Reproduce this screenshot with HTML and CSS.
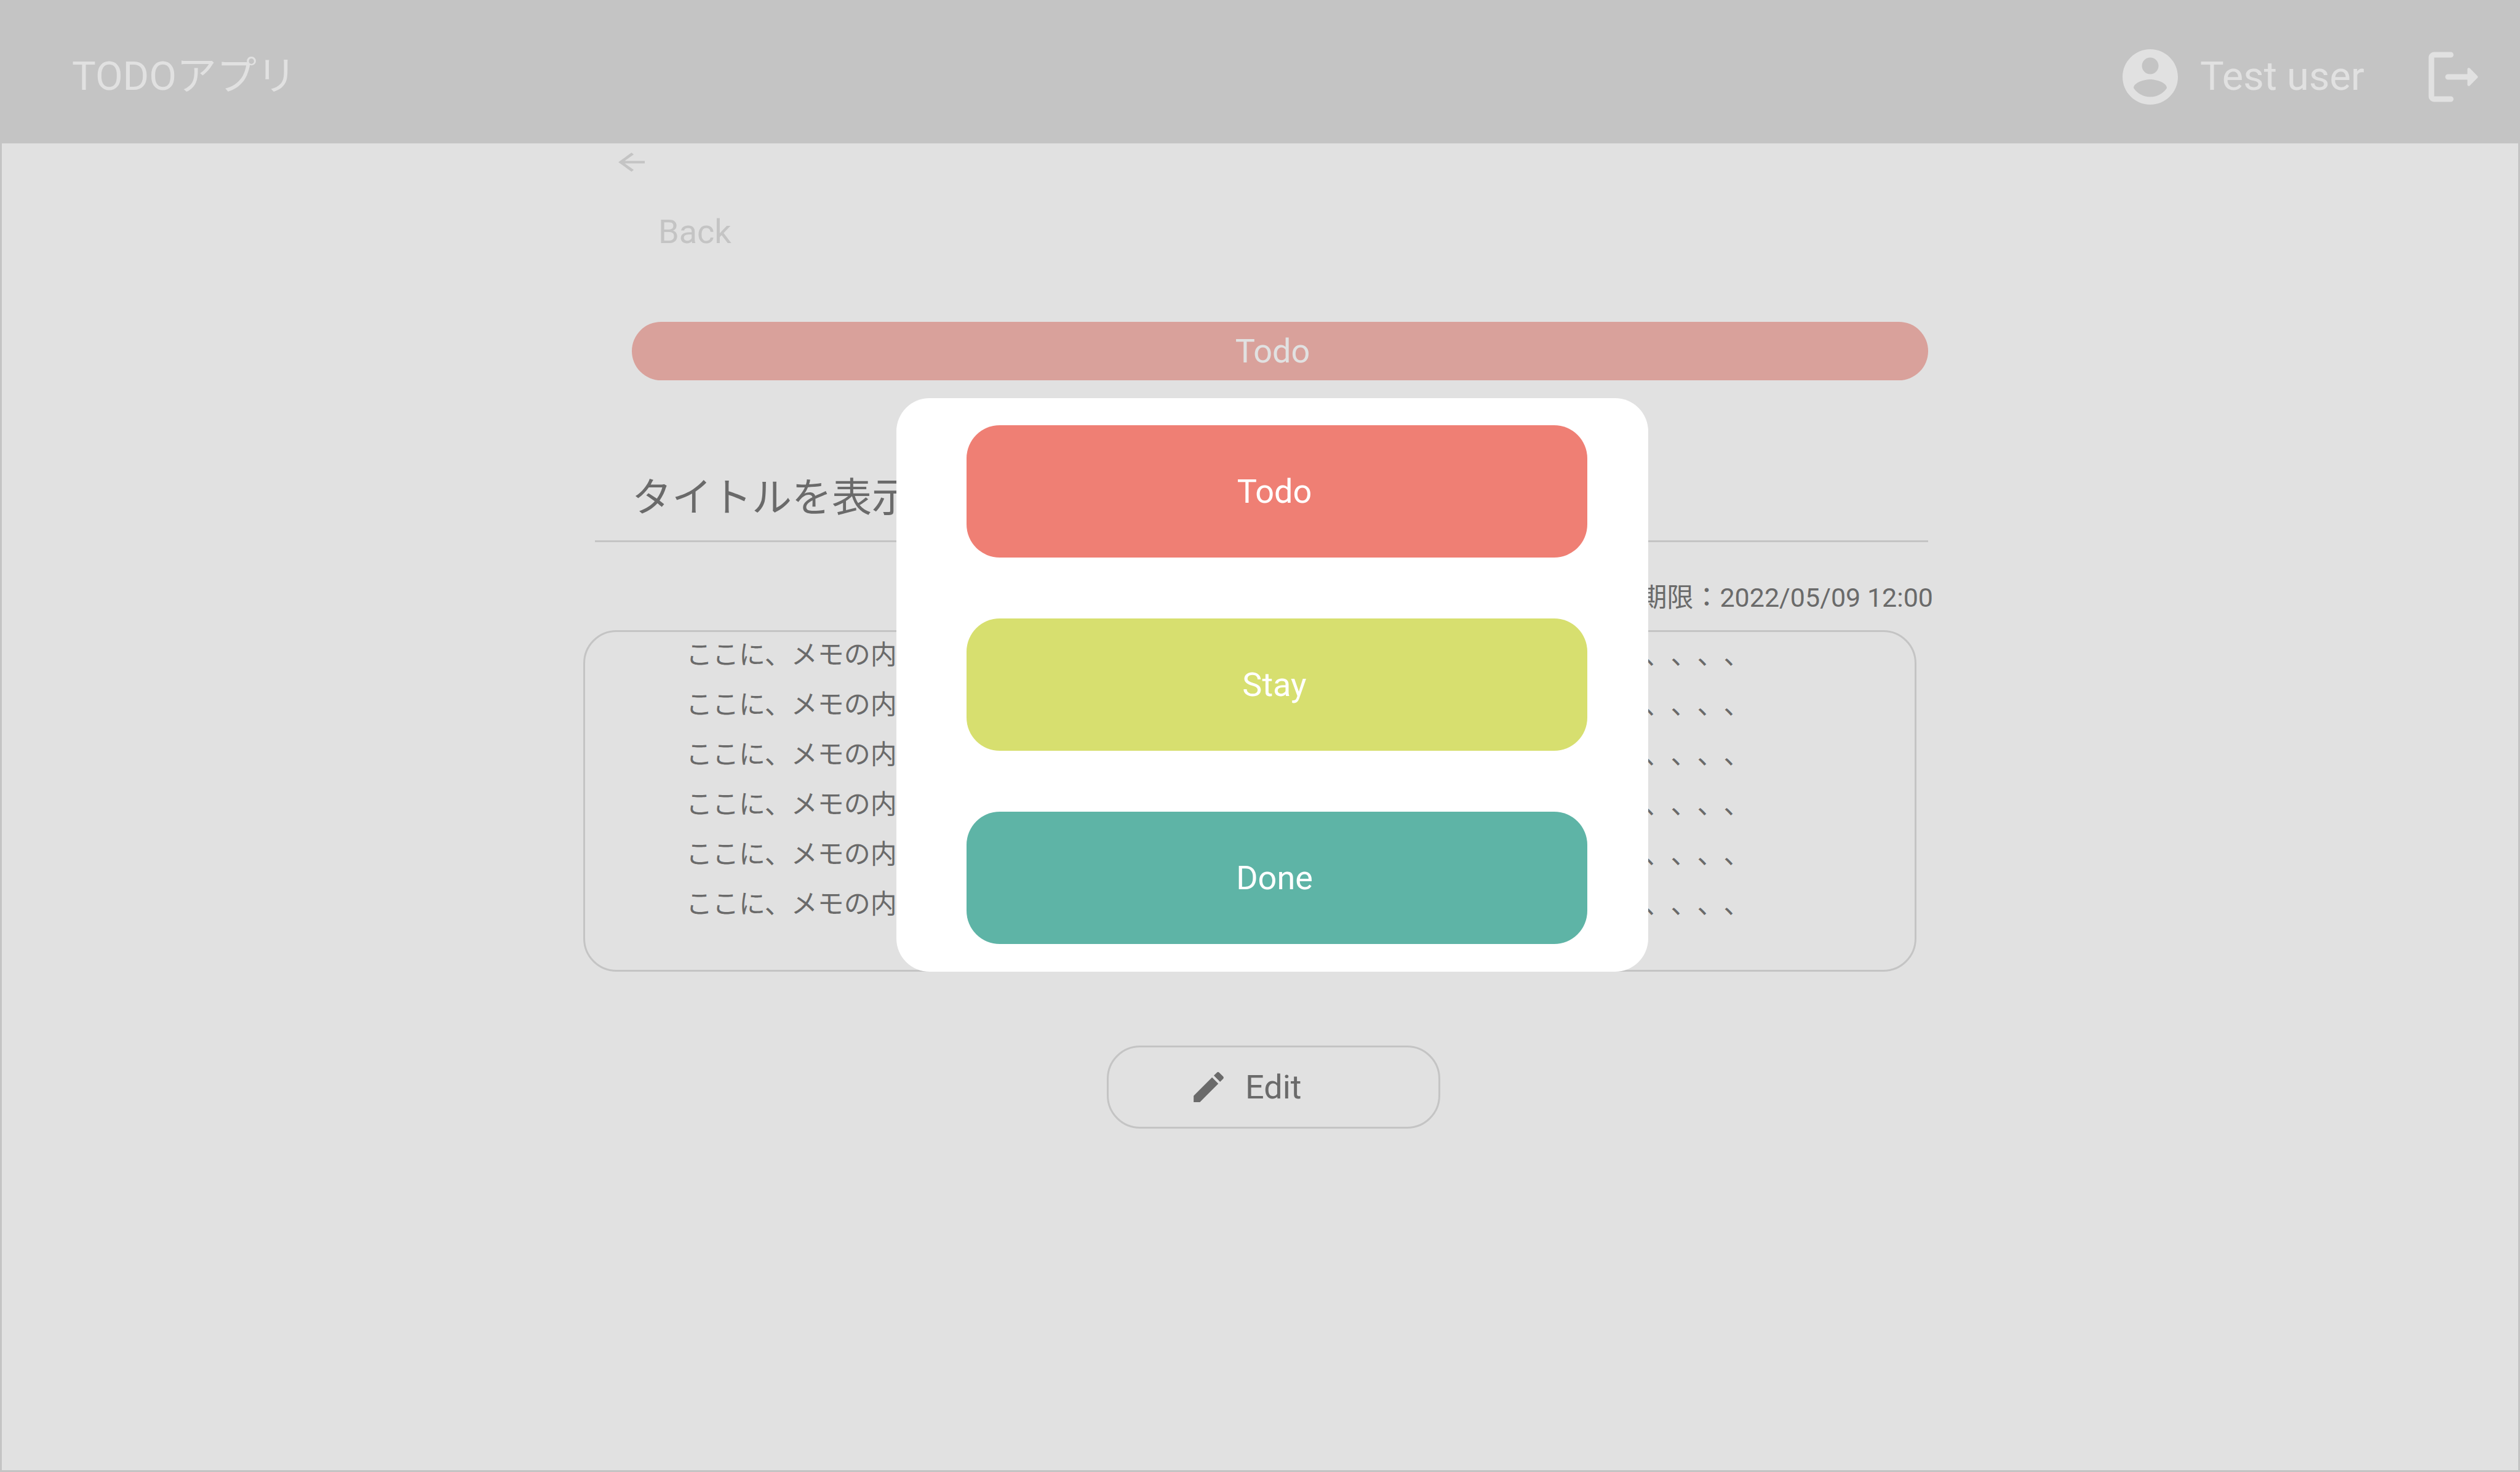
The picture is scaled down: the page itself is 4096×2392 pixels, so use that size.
FILE: index.html
```html
<!DOCTYPE html>
<html lang="ja">
<head>
<meta charset="utf-8">
<meta name="viewport" content="width=device-width, initial-scale=1">
<title>TODOアプリ</title>
<link rel="stylesheet" href="styles.css">
</head>
<body class="page">
  <header class="header">
    <h1 class="brand">TODOアプリ</h1>
    <div class="account">
      <svg class="account-icon" viewBox="0 0 24 24" aria-hidden="true"><path d="M12 2C6.48 2 2 6.48 2 12s4.48 10 10 10 10-4.48 10-10S17.52 2 12 2zm0 3c1.66 0 3 1.34 3 3s-1.34 3-3 3-3-1.34-3-3 1.34-3 3-3zm0 14.2c-2.5 0-4.71-1.28-6-3.22.03-1.99 4-3.08 6-3.08 1.99 0 5.97 1.09 6 3.08-1.29 1.94-3.5 3.22-6 3.22z"/></svg>
      <span class="account-name">Test user</span>
      <button class="logout" type="button" aria-label="Log out">
        <svg class="account-icon" viewBox="0 0 24 24" aria-hidden="true"><path d="M5 5h6c.55 0 1-.45 1-1s-.45-1-1-1H5c-1.1 0-2 .9-2 2v14c0 1.1.9 2 2 2h6c.55 0 1-.45 1-1s-.45-1-1-1H5V5z"/><path d="m20.65 11.65-2.79-2.79c-.32-.32-.86-.1-.86.35V11h-7c-.55 0-1 .45-1 1s.45 1 1 1h7v1.79c0 .45.54.67.85.35l2.79-2.79c.2-.19.2-.51.01-.7z"/></svg>
      </button>
    </div>
  </header>

  <main class="main">
    <div class="column">
      <a class="back" href="#">
        <svg class="back-icon" viewBox="0 0 48 34.4" preserveAspectRatio="none" aria-hidden="true"><path d="M0 17.2 24 0l4 3.3L11.6 15H48v4.4H11.6L28 31.1l-4 3.3z"/></svg>
        <span class="back-label">Back</span>
      </a>
      <button class="status" type="button">Todo</button>
      <h2 class="title">タイトルを表示</h2>
      <p class="deadline">期限：2022/05/09 12:00</p>
      <div class="memo">
        <p class="memo-line">ここに、メモの内容を表示 、、、、、、、、、、、、、、、、、、、、、、、、、、、、</p>
        <p class="memo-line">ここに、メモの内容を表示 、、、、、、、、、、、、、、、、、、、、、、、、、、、、</p>
        <p class="memo-line">ここに、メモの内容を表示 、、、、、、、、、、、、、、、、、、、、、、、、、、、、</p>
        <p class="memo-line">ここに、メモの内容を表示 、、、、、、、、、、、、、、、、、、、、、、、、、、、、</p>
        <p class="memo-line">ここに、メモの内容を表示 、、、、、、、、、、、、、、、、、、、、、、、、、、、、</p>
        <p class="memo-line">ここに、メモの内容を表示 、、、、、、、、、、、、、、、、、、、、、、、、、、、、</p>
      </div>
      <button class="edit" type="button">
        <svg class="edit-icon" viewBox="0 0 24 24" aria-hidden="true"><path d="M3 17.25V21h3.75L17.81 9.94l-3.75-3.75L3 17.25zM20.71 7.04c.39-.39.39-1.02 0-1.41l-2.34-2.34a.9959.9959 0 0 0-1.41 0l-1.83 1.83 3.75 3.75 1.83-1.83z"/></svg>
        <span>Edit</span>
      </button>
    </div>
  </main>

  <div class="overlay">
    <div class="dialog" role="dialog" aria-label="Status">
      <button class="choice choice-todo" type="button">Todo</button>
      <button class="choice choice-stay" type="button">Stay</button>
      <button class="choice choice-done" type="button">Done</button>
    </div>
  </div>
</body>
</html>
```
FILE: styles.css
```css
:root {
  --surface: #e1e1e1;
  --bar: #c4c4c4;
  --ink: #6a6a6a;
  --text-lg: 65px;
  --text-md: 54px;
  --text-sm: 43px;
  --radius: 54px;
}

* {
  box-sizing: border-box;
}

h1,
h2,
p {
  margin: 0;
  font-weight: 400;
}

button {
  padding: 0;
  border: 0;
  background: none;
  color: inherit;
  font: inherit;
  cursor: pointer;
}

.page {
  display: flex;
  flex-direction: column;
  min-height: 100vh;
  margin: 0;
  background: var(--surface);
  color: var(--ink);
  font-family: Roboto, "Noto Sans CJK JP", sans-serif;
  font-size: var(--text-md);
  text-spacing-trim: space-all;
}

/* Header */
.header {
  display: flex;
  align-items: center;
  justify-content: space-between;
  padding: 70px 54px 54px 117px;
  background: var(--bar);
  color: var(--surface);
  font-size: var(--text-lg);
  line-height: 109px;
}

.brand {
  font-size: var(--text-lg);
}

.account {
  display: flex;
  align-items: center;
}

.account-icon {
  display: block;
  width: 108px;
  height: 108px;
  fill: currentColor;
}

.account-name {
  margin: 0 91px 0 27px;
}

/* Task detail */
.main {
  flex: 1;
  border: solid var(--bar);
  border-width: 0 3px 3px;
}

.column {
  display: flex;
  flex-direction: column;
  max-width: 2200px;
  margin: 0 auto;
}

.back {
  align-self: flex-start;
  margin-left: 57px;
  padding-top: 15px;
  color: var(--bar);
  text-decoration: none;
}

.back-icon {
  display: block;
  width: 43px;
  height: 31px;
  fill: currentColor;
}

.back-label {
  display: block;
  margin: 57px 0 0 65px;
  line-height: 81px;
}

.status {
  margin: 106px 14px 0 79px;
  padding-right: 24px;
  border-radius: var(--radius);
  background: #d9a19b;
  color: var(--surface);
  line-height: 95px;
}

.title {
  margin: 137px 14px 0 19px;
  padding: 0 60px 14px;
  border-bottom: 3px solid var(--bar);
  font-size: var(--text-lg);
  line-height: 109px;
}

.deadline {
  margin: 50px 6px 0 0;
  font-size: var(--text-sm);
  line-height: 81px;
  text-align: right;
}

.memo {
  display: flex;
  flex-direction: column;
  gap: 6px;
  margin: 12px 33px 0 0;
  padding: 0 164px 69px;
  border: 3px solid var(--bar);
  border-radius: var(--radius);
  font-size: var(--text-sm);
  line-height: 75px;
  white-space: nowrap;
}

.edit {
  display: flex;
  align-items: center;
  align-self: center;
  gap: 27px;
  width: 542px;
  margin: 120px 0 0 44px;
  padding-left: 130px;
  border: 3px solid var(--bar);
  border-radius: var(--radius);
  line-height: 129px;
}

.edit-icon {
  width: 65px;
  height: 65px;
  fill: currentColor;
}

/* Status dialog */
.overlay {
  position: fixed;
  inset: 0;
  display: flex;
  align-items: flex-start;
  justify-content: center;
  padding: 647px 0 0 40px;
}

.dialog {
  display: flex;
  flex-direction: column;
  gap: 99px;
  width: 1222px;
  padding: 44px 99px 45px 114px;
  border-radius: var(--radius);
  background: #fff;
}

.choice {
  padding-right: 8px;
  border-radius: var(--radius);
  color: #fff;
  line-height: 215px;
}

.choice-todo {
  background: #ef7f74;
}

.choice-stay {
  background: #d7df6f;
}

.choice-done {
  background: #5eb4a6;
}
```
